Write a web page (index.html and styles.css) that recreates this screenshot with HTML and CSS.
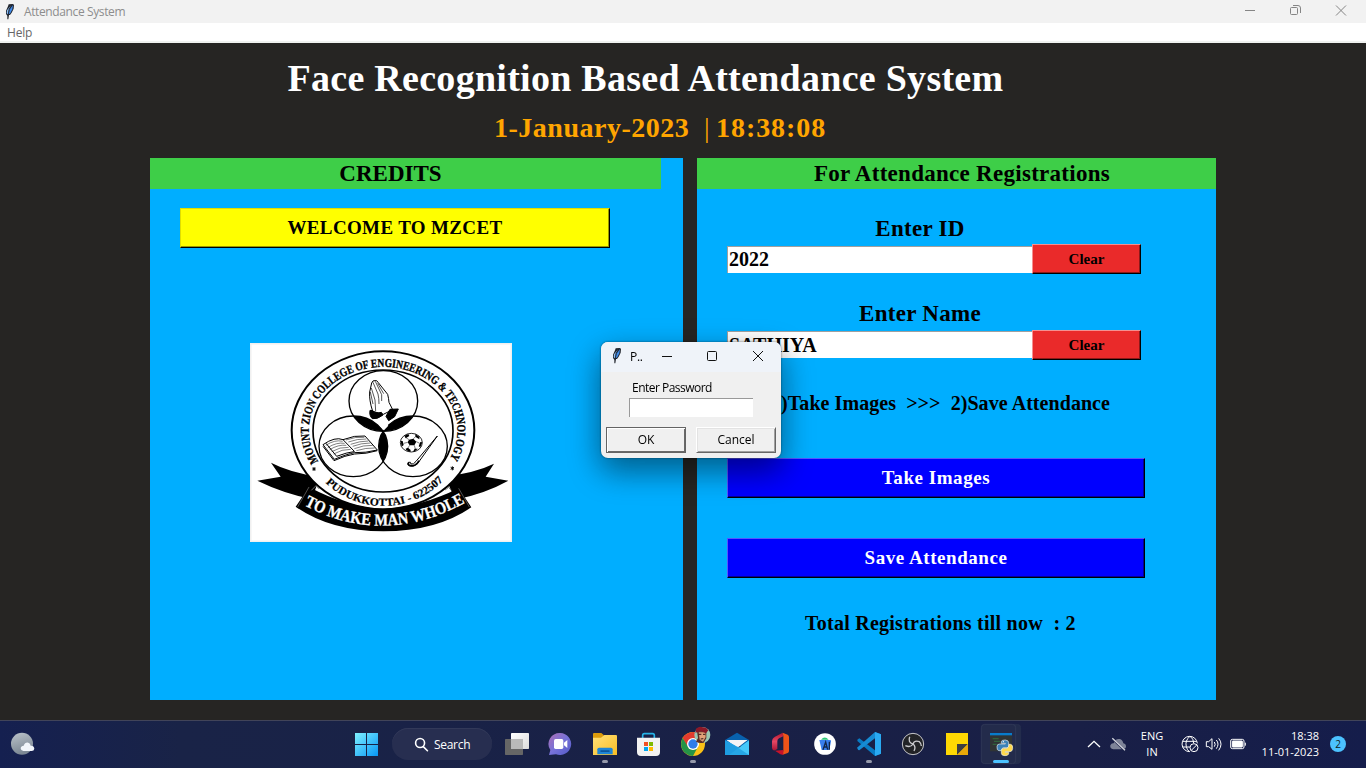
FILE: index.html
```
<!DOCTYPE html>
<html lang="en">
<head>
<meta charset="utf-8">
<title>Attendance System</title>
<link rel="stylesheet" href="styles.css">
</head>
<body>
<svg width="0" height="0" class="defs">
  <defs>
    <g id="feather">
      <path d="M26 9 L38 8 L42 10 L41 22 L35 34 L30 41 L27 41 L25 54 L22 54 L22 43 L18 38 L18 28 L24 15Z" fill="#20242c"/>
      <path d="M39 11 L37 24 L31 36 L26 39 L29 24Z" fill="#3f8cec"/>
      <path d="M34 11 L26 24 L24 39 L20 36 L21 27Z" fill="#8bbdf2"/>
      <path d="M36 11 L28 26 L24 42" fill="none" stroke="#1c2638" stroke-width="1.500"/>
    </g>
  </defs>
</svg>
<div class="screen">
  <header class="titlebar">
    <svg class="feather" viewBox="12 5 36 54"><use href="#feather"/></svg>
    <span class="titlebar-text">Attendance System</span>
    <svg class="window-controls" viewBox="0 0 116 23" fill="none" stroke="#858585">
      <path d="M9 10.500H19M100 5.500L110 15.500M110 5.500L100 15.500"/>
      <rect x="54.500" y="7.500" width="7" height="7" rx="1"/>
      <path d="M57 5.500h5q2.500 0 2.500 2.500v5"/>
    </svg>
  </header>
  <nav class="menubar"><span class="menu-text">Help</span></nav>

  <main class="app">
    <h1 class="app-title"><span>Face Recognition Based Attendance System</span></h1>
    <div class="datetime"><span class="date">1-January-2023</span><span class="divider">|</span><span class="time">18:38:08</span></div>
    <div class="panels">
      <section class="panel panel-credits">
        <h2 class="panel-head credits-head">CREDITS</h2>
        <div class="button welcome">WELCOME TO MZCET</div>
        <svg class="emblem" viewBox="30 24 786 597">
          <defs>
            <clipPath id="clipTop"><ellipse cx="430" cy="198" rx="103" ry="91"/></clipPath>
            <clipPath id="clipLeft"><ellipse cx="340" cy="334" rx="103" ry="91"/></clipPath>
            <path id="arcTop" d="M240 386 A223 190 0 1 1 619 386"/>
            <path id="arcLow" d="M254 440 A238 222 0 0 0 610 436"/>
            <path id="arcMotto" d="M190 510 Q430 636 672 505"/>
          </defs>
          <rect x="32" y="26" width="782" height="593" fill="#fff" stroke="#f0f0f0" stroke-width="5"/>
          <path d="M52 437 L122 425 L93 383 Q150 413 240 426 L215 492 Q130 475 52 437Z"/>
          <path d="M805 437 L737 425 L762 386 Q705 414 615 424 L645 494 Q735 476 805 437Z"/>
          <ellipse cx="429" cy="286" rx="274" ry="237" fill="#fff" stroke="#000" stroke-width="6"/>
          <g fill="none" stroke="#000" stroke-width="4">
            <ellipse cx="429" cy="288" rx="210" ry="183" stroke-width="5"/>
            <ellipse cx="430" cy="198" rx="103" ry="91"/>
            <ellipse cx="340" cy="334" rx="103" ry="91"/>
            <ellipse cx="519" cy="334" rx="103" ry="91"/>
          </g>
          <g clip-path="url(#clipTop)">
            <ellipse cx="340" cy="334" rx="103" ry="91"/>
            <ellipse cx="519" cy="334" rx="103" ry="91"/>
          </g>
          <g clip-path="url(#clipLeft)"><ellipse cx="519" cy="334" rx="103" ry="91"/></g>
          <path d="M432 259 l13 13 -13 14 -13 -14Z" fill="#fff"/>
          <!-- praying hands -->
          <g fill="#fff" stroke="#000" stroke-width="3" stroke-linejoin="round">
            <path d="M398 229 Q387 195 389 171 L395 144 Q398 135 405 137 Q410 134 415 143 L443 178 Q446 190 447 202 L458 224 L430 238Z"/>
            <path d="M394 159 L405 195 L407 228 M399 142 L414 177 Q417 190 417 207 M406 139 L425 179 L425 198 M391 171 L399 207 M413 145 L431 176" fill="none" stroke-width="2"/>
            <path d="M398 227 Q408 237 424 232 L429 240 Q411 254 397 251 Q387 242 390 226Z" fill="#000"/>
            <path d="M450 223 L475 222 L464 245 L446 257 L438 244Z" fill="#000"/>
          </g>
          <!-- open book -->
          <g fill="#fff" stroke="#000" stroke-width="3" stroke-linejoin="round">
            <path d="M249 329 L283 373 Q321 357 344 353 Q377 354 412 345 L375 303 Q344 300 309 314 Q285 304 249 329Z"/>
            <path d="M249 334 L282 377 Q316 361 344 357 Q380 357 412 347 M309 314 L344 350 M258 325 L290 364 Q321 352 342 350" fill="none"/>
            <path d="M257 331 Q285 313 308 319 M263 338 Q290 321 314 325 M269 344 Q295 328 319 331 M275 350 Q300 335 326 337 M281 357 Q306 342 332 343 M318 315 Q348 304 373 307 M325 321 Q352 311 379 312 M332 328 Q359 318 385 318 M338 334 Q364 324 391 324 M343 341 Q370 330 398 331 M349 347 Q377 338 404 339" fill="none" stroke-width="1.500"/>
          </g>
          <!-- ball and hockey stick -->
          <ellipse cx="514" cy="323" rx="33" ry="28" fill="#fff" stroke="#000" stroke-width="2.500"/>
          <path d="M507 314 l13 -3 9 9 -6 11 -14 0 -6 -9Z M493 302 l12 -5 3 6 -11 7Z M525 297 l13 8 0 8 -11 -7Z M482 318 l6 0 3 12 -6 5Z M541 321 l6 1 -6 15 -5 -3Z M497 341 l7 -3 8 7 -1 6 -12 -5Z M524 341 l9 0 -8 8 -6 1Z"/>
          <path d="M507 314 L498 308 M520 311 L528 304 M529 320 L539 325 M523 331 L526 342 M509 331 L503 340 M503 322 L491 325" stroke="#000" stroke-width="1.500"/>
          <path d="M592 303 L534 384 Q523 397 508 393 Q500 388 505 382 Q513 379 513 387 Q520 390 528 379Z" fill="#fff" stroke="#000" stroke-width="3"/>
          <path d="M537 377 L531 386 Q521 396 508 391 Q502 387 507 383" fill="none" stroke="#000" stroke-width="5"/>
          <!-- motto ribbon -->
          <path d="M207 456 Q317 515 429 523 Q545 515 656 460 L694 517 Q590 589 430 589 Q270 588 167 515Z"/>
          <path d="M207 456 L173 516 M656 460 L688 516" stroke="#777" stroke-width="2"/>
          <path d="M214 466 l14 -14 10 10 M615 465 l11 -8 8 9" fill="none" stroke="#777" stroke-width="3"/>
          <g class="emblem-text">
            <text font-size="36" stroke="#000"><textPath href="#arcTop" startOffset="8" textLength="838" lengthAdjust="spacingAndGlyphs">MOUNT ZION COLLEGE OF ENGINEERING &amp; TECHNOLOGY</textPath></text>
            <text font-size="33" stroke="#000" stroke-width=".6"><textPath href="#arcLow" startOffset="4" textLength="392" lengthAdjust="spacingAndGlyphs">PUDUKKOTTAI - 622507</textPath></text>
            <text font-size="51" fill="#fff" stroke="#fff"><textPath href="#arcMotto" startOffset="2" textLength="506" lengthAdjust="spacingAndGlyphs">TO MAKE MAN WHOLE</textPath></text>
          </g>
          <path d="M222 396V408M217 399L227 405M227 399L217 405M637 394V406M632 397L642 403M642 397L632 403" stroke="#000" stroke-width="3"/>
        </svg>
      </section>

      <section class="panel panel-register">
        <h2 class="panel-head register-head">For Attendance Registrations</h2>
        <div class="field-label id-label">Enter ID</div>
        <div class="field-row">
          <div class="entry">2022</div><div class="button clear">Clear</div>
        </div>
        <div class="field-label name-label">Enter Name</div>
        <div class="field-row name-row">
          <div class="entry">SATHIYA</div><div class="button clear">Clear</div>
        </div>
        <div class="steps">1)Take Images&nbsp; &gt;&gt;&gt;&nbsp; 2)Save Attendance</div>
        <div class="button action take">Take Images</div>
        <div class="button action save">Save Attendance</div>
        <div class="total">Total Registrations till now&nbsp; : 2</div>
      </section>
    </div>
  </main>

  <footer class="taskbar">
    <div class="weather">
      <svg viewBox="30 36 78 72" width="26" height="24">
        <defs><linearGradient id="moon" x2="0.300" y2="1"><stop stop-color="#bcc4cb"/><stop offset="1" stop-color="#7c8894"/></linearGradient></defs>
        <circle cx="66" cy="71" r="33" fill="url(#moon)"/>
        <path d="M70 93 Q62 92 62 85 Q63 77 71 77 Q75 66 85 68 Q91 70 92 77 Q102 76 103 86 Q102 93 95 93Z" fill="#f1f5fa"/>
      </svg>
    </div>
    <div class="apps">
      <svg class="app-icon" viewBox="15 0 132 144">
        <defs><linearGradient id="win" gradientUnits="userSpaceOnUse" x1="45" y1="39" x2="113" y2="107"><stop stop-color="#7ff0ff"/><stop offset="1" stop-color="#0897f5"/></linearGradient></defs>
        <path d="M45 39h33v33h-33zM81 39h33v33h-33zM45 75h33v33h-33zM81 75h33v33h-33z" fill="url(#win)"/>
      </svg>
      <div class="search">
        <svg viewBox="222 48 48 50" width="16" height="16" fill="none" stroke="#fff" stroke-width="5" stroke-linecap="round"><circle cx="240" cy="70" r="14"/><path d="M250 81L263 94"/></svg>
        <span>Search</span>
      </div>
      <svg class="app-icon" viewBox="465 0 132 144">
        <defs><linearGradient id="tv" x2="1" y2="1"><stop stop-color="#fff"/><stop offset="1" stop-color="#dcdcdc"/></linearGradient></defs>
        <rect x="513" y="39" width="54" height="48" rx="2" fill="url(#tv)"/><rect x="495" y="57" width="54" height="48" rx="2" fill="#666"/><path d="M513 57h36v30h-36z" fill="#b9b9b9"/>
      </svg>
      <svg class="app-icon" viewBox="597 0 132 144">
        <defs><linearGradient id="chat" x1="0" x2="1" y2="1"><stop stop-color="#ad6fb5"/><stop offset="0.500" stop-color="#7772d8"/><stop offset="1" stop-color="#5259c7"/></linearGradient></defs>
        <path d="M661 39 A34 33 0 1 1 648 103 L627 105 L631 90 A34 33 0 0 1 661 39Z" fill="url(#chat)"/>
        <rect x="642" y="57" width="28" height="30" rx="5" fill="#fff"/><path d="M672 68L682 60V84L672 76Z" fill="#fff"/>
      </svg>
      <svg class="app-icon" viewBox="24 0 132 144">
        <defs><linearGradient id="folder" x2="1" y2="1"><stop stop-color="#ffe179"/><stop offset="1" stop-color="#f9bd24"/></linearGradient></defs>
        <path d="M54 42q0-3 3-3h22l8 7-6 10H54z" fill="#dc9b0b"/>
        <path d="M54 53h24l10-8h35q3 0 3 3v57H54z" fill="url(#folder)"/>
        <path d="M67 103V88q0-5 5-5h36q5 0 5 5v15z" fill="#1e86d6"/><rect x="76" y="91" width="28" height="5" rx="2" fill="#0c579c"/>
        <rect x="81" y="120" width="18" height="9" rx="4.500" fill="#969aab"/>
      </svg>
      <svg class="app-icon" viewBox="156 0 132 144">
        <path d="M203 57V46q0-5 5-5h25q5 0 5 5v11" fill="none" stroke="#27b4e8" stroke-width="5"/>
        <path d="M186 53h69v43q0 12-12 12h-45q-12 0-12-12z" fill="#f2f2f2"/>
        <path d="M207 66h12v12h-12z" fill="#f25022"/><path d="M222 66h12v12h-12z" fill="#7fba00"/><path d="M207 81h12v12h-12z" fill="#00a4ef"/><path d="M222 81h12v12h-12z" fill="#ffb900"/>
      </svg>
      <svg class="app-icon" viewBox="288 0 132 144">
        <circle cx="354" cy="72" r="36" fill="#fbc116"/>
        <path d="M323 54A36 36 0 0 1 385 54L354 56L338 81Z" fill="#e33b2e"/>
        <path d="M323 54A36 36 0 0 0 354 108L369 80L354 90L340 82Z" fill="#249447"/>
        <circle cx="354" cy="72" r="18" fill="#fff"/><circle cx="354" cy="72" r="14" fill="#2f7de9"/>
        <circle cx="382" cy="45" r="24" fill="#9cc7b2"/>
        <path d="M363 65L369 54L366 34L394 33L394 55L386 68Q373 71 363 65Z" fill="#5b2d24"/>
        <path d="M371 37L391 37L392 51L384 65L374 59Z" fill="#e0a078"/>
        <path d="M361 38L364 25L375 20L393 23L400 31L393 40L379 34Z" fill="#8b1828"/>
        <path d="M371 43h8M384 43h7M377 57l8-1" stroke="#351816" stroke-width="3"/>
        <rect x="345" y="120" width="18" height="9" rx="4.500" fill="#969aab"/>
      </svg>
      <svg class="app-icon" viewBox="420 0 132 144">
        <path d="M450 60L486 38L522 60V78H450Z" fill="#0861ad"/><path d="M455 60h62L487 84Z" fill="#f4f4f6"/>
        <path d="M450 61L487 79L522 105H450Z" fill="#28a8ea"/><path d="M522 61V105L462 105Z" fill="#45c8fa"/><path d="M450 62L486 81L522 105H450Z" fill="#1998dd" opacity=".7"/>
        <path d="M455 60h62L487 80Z" fill="#f4f4f6"/>
      </svg>
      <svg class="app-icon" viewBox="552 0 132 144">
        <defs><linearGradient id="office" x2="0" y2="1"><stop stop-color="#b5152b"/><stop offset=".5" stop-color="#e54764"/><stop offset="1" stop-color="#a91535"/></linearGradient></defs>
        <path d="M623 38L600 50Q591 55 591 65V84Q592 93 600 91L607 87V63Q607 57 613 54L625 49Z" fill="url(#office)"/>
        <path d="M623 38L638 44Q642 46 642 51V93Q642 97 638 99L623 104L625 91V48Z" fill="#ee5419"/>
        <path d="M600 92L625 90V104Q620 105 616 103Z" fill="#c8112a"/>
      </svg>
      <svg class="app-icon" viewBox="-21 0 132 144">
        <circle cx="45" cy="72" r="32.500" fill="#fff"/><path d="M33 59Q44 46 56 59Z" fill="#2fc879"/>
        <path d="M28 60h32q3 0 3 4l-5 26H35z" fill="#397fee"/>
        <path d="M39 89L47 66L53 89M42 81h8M58 65v24" fill="none" stroke="#13284b" stroke-width="4"/>
      </svg>
      <svg class="app-icon" viewBox="111 0 132 144">
        <path d="M195 36L213 43V101L195 108L142 63Q140 59 148 55L195 91Z" fill="#087bc4"/>
        <path d="M195 36V55L148 91Q144 91 141 83Z" fill="#168bd3"/><path d="M195 36L213 43V101L195 108Z" fill="#2aaaf2"/>
        <rect x="168" y="120" width="18" height="9" rx="4.500" fill="#969aab"/>
      </svg>
      <svg class="app-icon" viewBox="243 0 132 144">
        <circle cx="309" cy="72" r="32" fill="#222326" stroke="#c8c8cc" stroke-width="3"/>
        <g fill="none" stroke="#c8c8cc" stroke-width="4"><path d="M299 50Q293 68 309 72Q319 80 312 93"/><path d="M309 72Q313 60 328 65Q334 70 334 78"/><path d="M309 72Q302 84 286 77"/></g>
      </svg>
      <svg class="app-icon" viewBox="375 0 132 144">
        <path d="M408 39h66v66h-66z" fill="#fed803"/><path d="M441 72h33L441 105z" fill="#3d3e40"/><path d="M474 72V105H441z" fill="#e9a909"/>
      </svg>
      <svg class="app-icon" viewBox="507 0 132 144">
        <path d="M610 13h12q10 0 10 10v98q0 10-10 10h-12z" fill="#232c4b" stroke="#303958"/>
        <rect x="514" y="13" width="103" height="118" rx="10" fill="#232b4b" stroke="#373f5c" stroke-width="2"/>
        <path d="M540 39h66v55h-66z" fill="#303434"/><path d="M540 39h66v7h-66z" fill="#087bcb"/>
        <path d="M548 56h18M552 64h18M548 73h12" stroke="#31623b" stroke-width="4"/>
        <path d="M574 70V64Q576 60 586 60Q596 61 596 68V78Q596 83 591 83H580Q574 85 574 92H567Q560 91 561 80Q561 72 569 72H586V70Z" fill="#3c81b7" stroke="#e9edf0" stroke-width="2"/>
        <path d="M597 73H602Q609 75 608 85Q607 95 600 95H586V97H596V102Q594 107 585 107Q574 107 574 100V91Q575 85 581 85H591Q597 83 597 73Z" fill="#ffd84b" stroke="#eef0e8" stroke-width="2"/>
        <circle cx="580" cy="65" r="2" fill="#fff"/>
        <rect x="549" y="120" width="48" height="9" rx="4.500" fill="#4cc2ff"/>
      </svg>
    </div>
    <div class="tray">
      <svg viewBox="45 0 138 144" width="46" height="48">
        <path d="M54 81L72 64L90 81" fill="none" stroke="#fff" stroke-width="4"/>
        <path d="M130 88Q119 86 121 76Q124 69 131 70Q136 55 149 57Q158 59 160 70Q169 72 168 82Q165 88 159 88Z" fill="#7e8498"/><path d="M125 54L165 92" stroke="#1a2148" stroke-width="6"/><path d="M127 55L165 91" stroke="#d5d7df" stroke-width="4"/>
      </svg>
      <div class="lang"><span>ENG</span><span>IN</span></div>
      <svg viewBox="330 0 204 144" width="68" height="48" fill="none" stroke="#fff" stroke-width="3">
        <path d="M359 95A23 23 0 1 1 382 70M338 64H380M338 81H360M360 49Q344 62 349 80Q351 91 359 95M360 49Q371 56 371 69"/>
        <circle cx="372" cy="83" r="12"/><path d="M364 91L380 75"/>
        <path d="M409 65H416L426 56V88L416 80H409ZM433 66Q438 73 433 80M439 60Q449 72 439 86M446 55Q460 72 446 91"/>
        <rect x="482" y="58" width="40" height="28" rx="5"/><rect x="487" y="63" width="30" height="18" rx="1" fill="#fff"/><path d="M526 68V77"/>
      </svg>
      <div class="clock"><span>18:38</span><span>11-01-2023</span></div>
      <div class="badge">2</div>
    </div>
  </footer>

  <div class="dialog">
    <div class="dialog-title">
      <svg class="dialog-feather" viewBox="12 5 36 54"><use href="#feather"/></svg>
      <span>P..</span>
      <svg class="dialog-controls" viewBox="0 0 110 28" fill="none" stroke="#111">
        <path d="M5 14.500H15M96 9L106 19M106 9L96 19"/><rect x="50.500" y="9.500" width="9" height="9" rx="1"/>
      </svg>
    </div>
    <div class="dialog-label">Enter Password</div>
    <div class="dialog-entry"></div>
    <div class="dialog-buttons"><div class="dialog-button ok">OK</div><div class="dialog-button">Cancel</div></div>
  </div>
</div>
</body>
</html>
```
FILE: styles.css
```
* { box-sizing: border-box; }
body { margin: 0; overflow: hidden; }
.defs { position: absolute; }
.screen {
  position: relative;
  width: 1366px;
  height: 768px;
  display: flex;
  flex-direction: column;
  font-family: "Open Sans", "Noto Sans", sans-serif;
  font-size: 12px;
  white-space: nowrap;
  overflow: hidden;
}
.titlebar {
  height: 23px;
  background: #f2f2f2;
  display: flex;
  align-items: center;
  color: #8d8d8d;
}
.feather { width: 12px; height: 18px; margin-left: 4px; }
.titlebar-text { margin-left: 8px; letter-spacing: -0.38px; }
.window-controls { width: 116px; height: 23px; margin-left: auto; margin-right: 14px; }
.menubar {
  height: 20px;
  background: #fff;
  border-bottom: 2px solid #f0f2f0;
  padding-left: 7px;
  line-height: 19px;
  letter-spacing: -0.2px;
  color: #666;
}
.app {
  height: 677px;
  background: #262523;
  font-family: "Liberation Serif", serif;
  font-weight: bold;
}
.app-title {
  margin: 0;
  width: 1291px;
  height: 70px;
  padding-top: 13px;
  text-align: center;
  font-size: 38px;
  line-height: 45px;
  letter-spacing: 0.27px;
  color: #fff;
}
.datetime {
  height: 45px;
  padding-left: 494px;
  display: flex;
  font-size: 28px;
  line-height: 29px;
  color: orange;
}
.date { width: 210px; letter-spacing: 0.5px; }
.divider { width: 12px; font-weight: normal; }
.time { letter-spacing: 0.95px; }
.panels { display: flex; gap: 14px; padding-left: 150px; }
.panel { height: 542px; background: #00aeff; color: #000; }
.panel-credits { width: 533px; }
.panel-register { width: 519px; }
.panel-head {
  margin: 0;
  height: 31px;
  background: #3ece48;
  font-size: 23px;
  line-height: 31px;
  text-align: center;
}
.credits-head { width: 511px; padding-right: 30px; }
.register-head { padding-left: 11px; letter-spacing: 0.28px; }
.button {
  display: flex;
  align-items: center;
  justify-content: center;
  border: 1px solid;
}
.welcome {
  width: 430px;
  height: 40px;
  margin: 19px 0 0 30px;
  background: #ff0;
  border-color: #e0dd00 #000 #000 #e0dd00;
  box-shadow: inset -1px -1px #999900;
  font-size: 19px;
  letter-spacing: 0.35px;
}
.emblem { display: block; width: 262px; height: 199px; margin: 95px 0 0 100px; }
.emblem-text { font-family: "Liberation Serif", serif; font-weight: bold; }
.field-label { width: 446px; font-size: 23px; line-height: 26px; text-align: center; letter-spacing: 0.3px; }
.id-label { margin-top: 27px; height: 28px; }
.name-label { margin-top: 27px; height: 29px; }
.field-row { display: flex; align-items: flex-end; height: 30px; padding-left: 30px; }
.entry {
  width: 305px;
  height: 27px;
  margin-bottom: 1px;
  padding-left: 1px;
  background: #fff;
  border-top: 1px solid #a0a0a0;
  border-left: 1px solid #a0a0a0;
  font-size: 20px;
  line-height: 25px;
}
.name-row .entry { margin-bottom: 2px; line-height: 26px; }
.clear {
  width: 109px;
  height: 30px;
  background: #ea2a2a;
  border-color: #f59090 #000 #000 #f59090;
  box-shadow: inset -1px -1px #8c1919;
  font-size: 15px;
}
.steps { margin: 31px 0 0 74px; height: 24px; font-size: 20px; line-height: 24px; letter-spacing: 0.06px; }
.action {
  width: 418px;
  height: 40px;
  margin-left: 30px;
  background: #00f;
  border-color: #5555ff #000 #000 #5555ff;
  box-shadow: inset -1px -1px #000099;
  color: #fff;
  font-size: 19px;
  letter-spacing: 0.55px;
}
.take { margin-top: 43px; }
.save { margin-top: 40px; }
.total { margin: 33px 0 0 108px; font-size: 20px; line-height: 24px; letter-spacing: 0.25px; }

.taskbar {
  height: 48px;
  background: linear-gradient(90deg, #152050 0, #192347 180px, #191f46 1080px, #151d4b 1366px);
  box-shadow: inset 0 1px #414459;
  display: flex;
  color: #fff;
}
.weather { width: 345px; padding: 12px 0 0 10px; }
.apps { display: flex; width: 740px; }
.app-icon { width: 44px; height: 48px; flex: none; }
.search {
  width: 100px;
  height: 32px;
  margin: 8px 3px 0;
  padding-left: 22px;
  border-radius: 16px;
  background: #272e50;
  box-shadow: inset 0 1px #323959;
  display: flex;
  align-items: center;
  gap: 4px;
  letter-spacing: -0.3px;
}
.tray { display: flex; align-items: center; }
.lang { width: 42px; display: flex; flex-direction: column; align-items: center; font-size: 11px; line-height: 16px; }
.tray .lang + svg { margin-left: 7px; }
.clock { width: 71px; display: flex; flex-direction: column; align-items: flex-end; font-size: 11px; line-height: 16px; }
.badge { width: 16px; height: 16px; margin-left: 11px; border-radius: 50%; background: #4cc2ff; color: #122; font-size: 10px; line-height: 16px; text-align: center; }

.dialog {
  position: absolute;
  left: 601px;
  top: 342px;
  width: 180px;
  height: 116px;
  border-radius: 7px;
  background: #f0f0f0;
  overflow: hidden;
  color: #000;
  filter: drop-shadow(0 12px 16px rgba(0, 0, 0, 0.35)) drop-shadow(0 0 1px rgba(0, 0, 0, 0.5));
}
.dialog-title { height: 30px; padding-bottom: 2px; background: #eff3f9; display: flex; align-items: center; }
.dialog-feather { width: 12px; height: 18px; margin-left: 10px; }
.dialog-title span { width: 25px; margin-left: 7px; letter-spacing: -0.3px; }
.dialog-controls { width: 110px; height: 28px; margin-left: 2px; }
.dialog-label { margin: 8px 0 0 31px; height: 18px; line-height: 16px; letter-spacing: -0.52px; }
.dialog-entry { width: 124px; height: 19px; margin-left: 28px; background: #fff; border-top: 1px solid #999; border-left: 1px solid #999; }
.dialog-buttons { display: flex; gap: 10px; padding: 10px 0 0 5px; }
.dialog-button {
  width: 80px;
  height: 26px;
  border: 1px solid;
  border-color: #fff #666 #666 #fff;
  box-shadow: inset 1px 1px #e3e3e3, inset -1px -1px #a0a0a0;
  line-height: 24px;
  text-align: center;
}
.ok { border-color: #646464; box-shadow: inset 1px 1px #fff, inset -1px -1px #696969; }
```
